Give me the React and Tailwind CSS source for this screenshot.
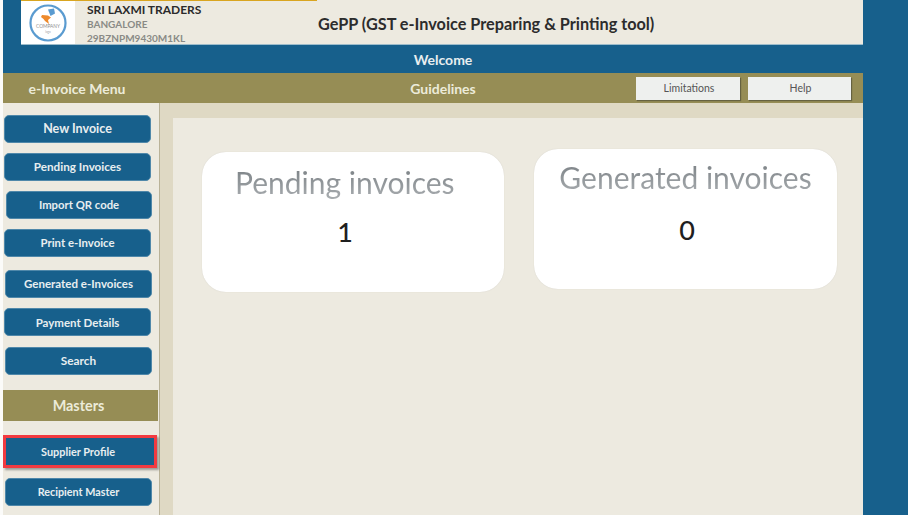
function MenuButton({ label, ml, width, mt, size, pad = "" }) {
  return (
    <div
      className={`${ml} ${width} ${mt} ${size} ${pad} flex h-[28px] items-center justify-center rounded-[5px] border border-[#4f88aa] bg-[#17608c] font-bold text-[#e8eef0]`}
    >
      {label}
    </div>
  );
}

function Logo() {
  return (
    <div className="flex h-[43px] w-[54px] shrink-0 items-center justify-center bg-white">
      <svg width="40" height="40" viewBox="0 0 40 40">
        <circle cx="20" cy="20" r="17.5" fill="#fff" stroke="#5a9bd0" strokeWidth="2.2" />
        <path d="M20 6.5l6-1 1 5-4.500 2.500z" fill="#5a9bd0" />
        <path d="M14 12l6 .5 3 2-3 2.500 1 4-4-3-1.500-2-2.500-2z" fill="#ee8a2c" />
        <text x="20" y="25" textAnchor="middle" fontSize="4.800" fill="#8f8f8f" fontFamily="Lato, sans-serif">COMPANY</text>
        <text x="20" y="30" textAnchor="middle" fontSize="3" fill="#a5a5a5" fontFamily="Lato, sans-serif">logo</text>
      </svg>
    </div>
  );
}

function StatCard({ title, value, className, titleClass, valueClass }) {
  return (
    <div className={`${className} flex h-[140px] flex-col rounded-[24px] bg-white shadow-[0_0_1px_rgba(120,120,110,0.25)]`}>
      <div className={`${titleClass} bg-gradient-to-b from-[#7b8185] to-[#aeb2b5] bg-clip-text pb-[6px] text-[30px] leading-none text-transparent`}>{title}</div>
      <div className={`${valueClass} text-[27px] leading-none font-medium text-[#1f1f1f]`}>{value}</div>
    </div>
  );
}

export default function App() {
  return (
    <div className="flex h-[515px] w-[908px] overflow-hidden bg-[#fbfbf9] font-['Lato',sans-serif]">
      <div className="ml-[3px] flex w-[860px] flex-col bg-[#edeae0]">
        <div className="h-[45px] shrink-0 bg-[#17608c] pl-[18px]">
          <div className="relative flex h-[45px] border-b border-b-[#9dbccb] bg-[#edeae0] pt-[1px]">
            <div className="absolute top-0 left-0 h-[1px] w-[296px] bg-[#d9a520]" />
            <Logo />
            <div className="ml-[12px] w-[231px] pt-[2px]">
              <div className="text-[12px] leading-[14px] font-bold text-[#2b2b2b]">SRI LAXMI TRADERS</div>
              <div className="mt-[1px] text-[10px] leading-[13px] font-bold text-[#8a8a86]">BANGALORE</div>
              <div className="text-[10px] leading-[14px] font-bold text-[#8a8a86]">29BZNPM9430M1KL</div>
            </div>
            <div className="pt-[14px] text-[16.25px] leading-[18px] font-bold text-[#2c2c2c]">
              GePP (GST e-Invoice Preparing &amp; Printing tool)
            </div>
          </div>
        </div>
        <div className="flex h-[28px] shrink-0 items-center justify-center bg-[#17608c] pl-[20px] text-[14px] font-bold text-[#e8eef0]">
          Welcome
        </div>
        <div className="flex h-[30px] shrink-0 items-center bg-[#968d55] text-[14px] font-bold text-[#ecebd9]">
          <div className="w-[148px] text-center">e-Invoice Menu</div>
          <div className="w-[485px] pl-[99px] text-center">Guidelines</div>
          <div className="flex gap-[8px]">
            <div className="flex h-[23px] w-[104px] items-center justify-center bg-[#eef0ee] pt-[1px] pl-[2px] text-[10.5px] font-normal text-[#555] shadow-[1px_1px_1px_rgba(70,70,50,0.6)]">Limitations</div>
            <div className="flex h-[23px] w-[103px] items-center justify-center bg-[#eef0ee] pt-[1px] pl-[2px] text-[10.5px] font-normal text-[#555] shadow-[1px_1px_1px_rgba(70,70,50,0.6)]">Help</div>
          </div>
        </div>
        <div className="flex min-h-0 flex-1">
          <aside className="w-[157px] shrink-0 border-r border-r-[#b9b298]">
            <MenuButton label="New Invoice" ml="ml-[1px]" width="w-[147px]" mt="mt-[12px]" size="text-[12.5px]" pad="pt-[1px]" />
            <MenuButton label="Pending Invoices" ml="ml-[1px]" width="w-[147px]" mt="mt-[10px]" size="text-[11.7px]" />
            <MenuButton label="Import QR code" ml="ml-[3px]" width="w-[146px]" mt="mt-[10px]" size="text-[11.3px]" />
            <MenuButton label="Print e-Invoice" ml="ml-[1px]" width="w-[147px]" mt="mt-[10px]" size="text-[11.4px]" />
            <MenuButton label="Generated e-Invoices" ml="ml-[2px]" width="w-[147px]" mt="mt-[13px]" size="text-[11.5px]" />
            <MenuButton label="Payment Details" ml="ml-[1px]" width="w-[147px]" mt="mt-[10px]" size="text-[11.5px]" pad="pt-[1px]" />
            <MenuButton label="Search" ml="ml-[2px]" width="w-[147px]" mt="mt-[11px]" size="text-[11.8px]" />
            <div className="mt-[15px] flex h-[31px] w-[155px] items-center justify-center bg-[#968d55] pr-[4px] text-[14.4px] font-bold text-[#ecebd9]">Masters</div>
            <div className="mt-[14px] h-[33px] w-[154px] border-[3px] border-[#f23a40] shadow-[2px_2px_2px_rgba(60,60,60,0.45)]">
              <div className="flex h-full items-center justify-center bg-[#17608c] pt-[2px] pr-[4px] text-[10.9px] font-bold text-[#e8eef0]">Supplier Profile</div>
            </div>
            <MenuButton label="Recipient Master" ml="ml-[2px]" width="w-[147px]" mt="mt-[10px]" size="text-[10.8px]" />
          </aside>
          <div className="w-[13px] shrink-0 bg-[#dfd9c4]" />
          <main className="min-w-0 flex-1">
            <div className="h-[15px] bg-[#dfd9c4]" />
            <div className="flex items-start pl-[29px]">
              <StatCard title="Pending invoices" value="1" className="mt-[34px] w-[302px]" titleClass="mt-[15px] ml-[33px] self-start" valueClass="mt-[15px] pr-[16px] text-center" />
              <StatCard title="Generated invoices" value="0" className="mt-[31px] ml-[30px] w-[303px]" titleClass="mt-[13px] self-center" valueClass="mt-[18px] pl-[3px] text-center" />
            </div>
          </main>
        </div>
      </div>
      <div className="flex-1 bg-[#17608c]" />
    </div>
  );
}
